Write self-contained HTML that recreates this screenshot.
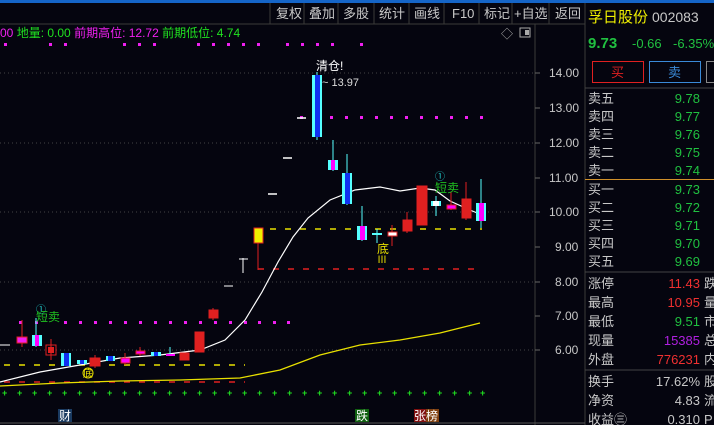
<!DOCTYPE html><html><head><meta charset="utf-8"><style>
*{margin:0;padding:0}body{width:714px;height:425px;background:#05050f;overflow:hidden;position:relative;font-family:"Liberation Sans","Noto Sans CJK SC",sans-serif}
.t{position:absolute;white-space:nowrap;font-size:13px}
</style></head><body>
<svg width="714" height="425" style="position:absolute;left:0;top:0" font-family="Liberation Sans, Noto Sans CJK SC, sans-serif">
<rect x="0" y="0" width="714" height="3" fill="#1565c8"/>
<!-- toolbar -->
<g stroke="#3a3a3a" fill="none"><line x1="0" y1="24" x2="585" y2="24"/>
<line x1="270" y1="3" x2="270" y2="24"/><line x1="304" y1="3" x2="304" y2="24"/><line x1="338" y1="3" x2="338" y2="24"/><line x1="374" y1="3" x2="374" y2="24"/><line x1="409" y1="3" x2="409" y2="24"/><line x1="444" y1="3" x2="444" y2="24"/><line x1="479" y1="3" x2="479" y2="24"/><line x1="512" y1="3" x2="512" y2="24"/><line x1="549" y1="3" x2="549" y2="24"/><line x1="585" y1="3" x2="585" y2="425"/>
<line x1="535" y1="24" x2="535" y2="425"/><line x1="0" y1="423" x2="585" y2="423" stroke="#555"/></g>
<g fill="#c8c8c8" font-size="13"><text x="276" y="18">复权</text><text x="309" y="18">叠加</text><text x="343" y="18">多股</text><text x="379" y="18">统计</text><text x="414" y="18">画线</text><text x="452" y="18">F10</text><text x="484" y="18">标记</text><text x="514" y="18">+自选</text><text x="555" y="18">返回</text></g>
<text x="0" y="37" font-size="12" fill="#f020f0"><tspan>00</tspan><tspan fill="#20e020"> 地量: 0.00 </tspan><tspan> 前期高位: 12.72 </tspan><tspan fill="#20e020"> 前期低位: 4.74</tspan></text>
<text x="501" y="38" font-size="12" fill="#aaa">◇</text><rect x="520" y="28" width="10" height="9" fill="none" stroke="#aaa"/><rect x="525" y="30" width="4" height="5" fill="#aaa"/>
<!-- grid -->
<g stroke="#444" stroke-dasharray="1,3"><line x1="0" y1="73" x2="535" y2="73"/><line x1="0" y1="143" x2="535" y2="143"/><line x1="0" y1="212" x2="535" y2="212"/><line x1="0" y1="282" x2="535" y2="282"/><line x1="0" y1="350" x2="535" y2="350"/></g>
<g stroke="#666"><line x1="535" y1="73" x2="540" y2="73"/><line x1="535" y1="108" x2="540" y2="108"/><line x1="535" y1="143" x2="540" y2="143"/><line x1="535" y1="178" x2="540" y2="178"/><line x1="535" y1="212" x2="540" y2="212"/><line x1="535" y1="247" x2="540" y2="247"/><line x1="535" y1="282" x2="540" y2="282"/><line x1="535" y1="316" x2="540" y2="316"/><line x1="535" y1="350" x2="540" y2="350"/></g>
<g fill="#c8c8c8" font-size="12"><text x="549" y="77">14.00</text><text x="549" y="112">13.00</text><text x="549" y="147">12.00</text><text x="549" y="182">11.00</text><text x="549" y="216">10.00</text><text x="555" y="251">9.00</text><text x="555" y="286">8.00</text><text x="555" y="320">7.00</text><text x="555" y="354">6.00</text></g>
<!-- dots -->
<g fill="#f020f0" id="d">
<rect x="4" y="43" width="3" height="3"/><rect x="49" y="43" width="3" height="3"/><rect x="64" y="43" width="3" height="3"/><rect x="123" y="43" width="3" height="3"/><rect x="138" y="43" width="3" height="3"/><rect x="153" y="43" width="3" height="3"/><rect x="197" y="43" width="3" height="3"/><rect x="212" y="43" width="3" height="3"/><rect x="227" y="43" width="3" height="3"/><rect x="242" y="43" width="3" height="3"/><rect x="257" y="43" width="3" height="3"/><rect x="286" y="43" width="3" height="3"/><rect x="301" y="43" width="3" height="3"/><rect x="316" y="43" width="3" height="3"/><rect x="331" y="43" width="3" height="3"/><rect x="360" y="43" width="3" height="3"/>
</g>
<g fill="#f020f0">
<rect x="300" y="116" width="3" height="3"/><rect x="315" y="116" width="3" height="3"/><rect x="330" y="116" width="3" height="3"/><rect x="345" y="116" width="3" height="3"/><rect x="360" y="116" width="3" height="3"/><rect x="375" y="116" width="3" height="3"/><rect x="390" y="116" width="3" height="3"/><rect x="405" y="116" width="3" height="3"/><rect x="420" y="116" width="3" height="3"/><rect x="435" y="116" width="3" height="3"/><rect x="450" y="116" width="3" height="3"/><rect x="465" y="116" width="3" height="3"/><rect x="480" y="116" width="3" height="3"/>
</g>
<g fill="#f020f0"><text x="0" y="0"/>
<rect x="19" y="321" width="3" height="3"/><rect x="35" y="321" width="3" height="3"/><rect x="64" y="321" width="3" height="3"/><rect x="79" y="321" width="3" height="3"/><rect x="94" y="321" width="3" height="3"/><rect x="109" y="321" width="3" height="3"/><rect x="124" y="321" width="3" height="3"/><rect x="139" y="321" width="3" height="3"/><rect x="154" y="321" width="3" height="3"/><rect x="169" y="321" width="3" height="3"/><rect x="184" y="321" width="3" height="3"/><rect x="199" y="321" width="3" height="3"/><rect x="214" y="321" width="3" height="3"/><rect x="229" y="321" width="3" height="3"/><rect x="244" y="321" width="3" height="3"/><rect x="258" y="321" width="3" height="3"/><rect x="273" y="321" width="3" height="3"/><rect x="287" y="321" width="3" height="3"/>
</g>
<g fill="#20e020" font-size="9" font-weight="bold">
<text x="2" y="396">+</text><text x="17" y="396">+</text><text x="32" y="396">+</text><text x="47" y="396">+</text><text x="62" y="396">+</text><text x="77" y="396">+</text><text x="92" y="396">+</text><text x="107" y="396">+</text><text x="122" y="396">+</text><text x="137" y="396">+</text><text x="152" y="396">+</text><text x="167" y="396">+</text><text x="182" y="396">+</text><text x="197" y="396">+</text><text x="212" y="396">+</text><text x="227" y="396">+</text><text x="242" y="396">+</text><text x="257" y="396">+</text><text x="272" y="396">+</text><text x="287" y="396">+</text><text x="302" y="396">+</text><text x="317" y="396">+</text><text x="332" y="396">+</text><text x="347" y="396">+</text><text x="362" y="396">+</text><text x="377" y="396">+</text><text x="392" y="396">+</text><text x="407" y="396">+</text><text x="422" y="396">+</text><text x="437" y="396">+</text><text x="452" y="396">+</text><text x="467" y="396">+</text><text x="480" y="396">+</text>
</g>
<!-- dashed -->
<g stroke-width="1.5" stroke-dasharray="6,9"><line x1="4" y1="365" x2="245" y2="365" stroke="#e8e000"/><line x1="270" y1="229" x2="482" y2="229" stroke="#e8e000"/><line x1="4" y1="382" x2="245" y2="382" stroke="#e02020"/><line x1="258" y1="269" x2="482" y2="269" stroke="#e02020"/></g>
<!-- MAs -->
<polyline fill="none" stroke="#e8e000" stroke-width="1.3" points="0,386 60,383 120,381 180,380 240,378 280,370 320,355 360,345 400,340 440,333 480,323"/>
<polyline fill="none" stroke="#fff" stroke-width="1.2" points="0,382 40,372 80,365 120,358 160,355 200,350 225,340 245,320 262,292 278,262 293,237 308,218 330,200 355,190 380,187 400,191 420,188 435,190 450,201 470,210 482,215"/>
<!-- candles -->
<g stroke-width="1">
<line x1="22" y1="320" x2="22" y2="347" stroke="#e02020"/><rect x="17" y="337" width="10" height="6" fill="#f020f0" stroke="#e02020"/>
<line x1="36" y1="318" x2="36" y2="347" stroke="#5ff"/><rect x="32" y="335" width="10" height="11" fill="#5ff"/><rect x="35" y="335" width="4" height="11" fill="#f0f"/>
<line x1="51" y1="339" x2="51" y2="360" stroke="#e02020"/><rect x="46" y="345" width="10" height="10" fill="none" stroke="#e02020"/><rect x="48" y="347" width="6" height="6" fill="#e02020"/>
<rect x="61" y="353" width="10" height="13" fill="#5ff"/><rect x="64" y="353" width="5" height="13" fill="#1030f0"/>
<rect x="77" y="360" width="10" height="4" fill="#5ff"/><rect x="80" y="360" width="4" height="4" fill="#1030f0"/>
<line x1="95" y1="355" x2="95" y2="368" stroke="#e02020"/><rect x="90" y="358" width="10" height="8" fill="#e02020" stroke="#e02020"/>
<rect x="106" y="356" width="9" height="5" fill="#5ff"/><rect x="108" y="356" width="5" height="5" fill="#1030f0"/>
<line x1="125" y1="353" x2="125" y2="365" stroke="#e02020"/><rect x="121" y="358" width="9" height="5" fill="#f0f" stroke="#e02020"/>
<line x1="140" y1="347" x2="140" y2="356" stroke="#e02020"/><rect x="136" y="351" width="9" height="3" fill="#f0f" stroke="#e02020"/>
<rect x="151" y="352" width="10" height="4" fill="#5ff"/><rect x="154" y="352" width="4" height="4" fill="#1030f0"/>
<line x1="170" y1="347" x2="170" y2="356" stroke="#5ff"/><rect x="166" y="354" width="9" height="2" fill="#f0f"/>
<rect x="180" y="353" width="9" height="7" fill="#e02020" stroke="#e02020"/>
<rect x="195" y="332" width="9" height="20" fill="#e02020" stroke="#e02020"/>
<line x1="213" y1="308" x2="213" y2="320" stroke="#e02020"/><rect x="209" y="310" width="9" height="8" fill="#e02020" stroke="#e02020"/>
<line x1="224" y1="286" x2="233" y2="286" stroke="#fff"/>
<line x1="243" y1="258" x2="243" y2="273" stroke="#fff"/><line x1="239" y1="259" x2="248" y2="259" stroke="#fff"/>
<line x1="258" y1="228" x2="258" y2="270" stroke="#e02020"/><rect x="254" y="228" width="9" height="15" fill="#f0f000" stroke="#e02020"/>
<line x1="268" y1="194" x2="277" y2="194" stroke="#fff" stroke-width="1.5"/>
<line x1="283" y1="158" x2="292" y2="158" stroke="#fff" stroke-width="1.5"/>
<line x1="297" y1="118" x2="306" y2="118" stroke="#fff" stroke-width="1.5"/>
<line x1="317" y1="72" x2="317" y2="140" stroke="#5ff"/><rect x="312" y="75" width="10" height="62" fill="#5ff"/><rect x="315" y="75" width="5" height="62" fill="#1030f0"/>
<line x1="333" y1="140" x2="333" y2="171" stroke="#5ff"/><rect x="328" y="160" width="10" height="10" fill="#5ff"/><rect x="331" y="160" width="4" height="10" fill="#f0f"/>
<line x1="347" y1="154" x2="347" y2="205" stroke="#5ff"/><rect x="342" y="173" width="10" height="31" fill="#5ff"/><rect x="345" y="173" width="5" height="31" fill="#1030f0"/>
<line x1="362" y1="206" x2="362" y2="241" stroke="#5ff"/><rect x="357" y="226" width="10" height="14" fill="#5ff"/><rect x="360" y="226" width="5" height="14" fill="#f0f"/>
<line x1="377" y1="229" x2="377" y2="243" stroke="#5ff"/><rect x="372" y="233" width="10" height="2" fill="#5ff"/>
<line x1="392" y1="225" x2="392" y2="246" stroke="#e02020"/><rect x="388" y="232" width="9" height="4" fill="#fff" stroke="#e02020"/>
<line x1="407" y1="212" x2="407" y2="233" stroke="#e02020"/><rect x="403" y="220" width="9" height="11" fill="#e02020" stroke="#e02020"/>
<rect x="417" y="186" width="10" height="39" fill="#e02020" stroke="#e02020"/>
<line x1="436" y1="196" x2="436" y2="216" stroke="#5ff"/><rect x="431" y="201" width="10" height="5" fill="#5ff"/><rect x="433" y="201" width="6" height="5" fill="#fff"/>
<line x1="451" y1="192" x2="451" y2="210" stroke="#e02020"/><rect x="447" y="205" width="9" height="4" fill="#f0f" stroke="#e02020"/>
<line x1="466" y1="182" x2="466" y2="220" stroke="#e02020"/><rect x="462" y="199" width="9" height="19" fill="#e02020" stroke="#e02020"/>
<line x1="481" y1="179" x2="481" y2="228" stroke="#5ff"/><rect x="476" y="203" width="10" height="18" fill="#5ff"/><rect x="479" y="203" width="5" height="18" fill="#f0f"/>
</g>
<line x1="0" y1="345" x2="10" y2="345" stroke="#fff"/>
<!-- labels -->
<text x="316" y="70" font-size="12" fill="#fff">清仓!</text><text x="322" y="86" font-size="11" fill="#ddd">~ 13.97</text>
<text x="36" y="313" font-size="10" fill="#2cc">①</text><text x="36" y="321" font-size="12" fill="#20c020">短卖</text>
<text x="435" y="180" font-size="10" fill="#2cc">①</text><text x="435" y="192" font-size="12" fill="#20c020">短卖</text>
<text x="377" y="253" font-size="12" fill="#e8e000">底</text><text x="377" y="263" font-size="10" fill="#e8e000">Ⅲ</text>
<circle cx="88" cy="373" r="5" fill="none" stroke="#e8e000"/><text x="83" y="377" font-size="10" fill="#e8e000">底</text>
<rect x="58" y="409" width="14" height="13" fill="#1a3a60"/><text x="59" y="420" font-size="12" fill="#fff">财</text>
<rect x="355" y="409" width="14" height="13" fill="#106010"/><text x="356" y="420" font-size="12" fill="#fff">跌</text>
<rect x="414" y="409" width="12" height="13" fill="#801010"/><rect x="426" y="409" width="13" height="13" fill="#804010"/><text x="414" y="420" font-size="12" fill="#fff">张榜</text>
<!-- right panel -->
<text x="588" y="22" font-size="15" fill="#f0f000">孚日股份</text><text x="652" y="22" font-size="14" fill="#c8c8c8">002083</text>
<text x="588" y="48" font-size="15" font-weight="bold" fill="#20c040">9.73</text><text x="632" y="48" font-size="13" fill="#20c040">-0.66</text><text x="673" y="48" font-size="13" fill="#20c040">-6.35%</text>
<rect x="592.5" y="61.5" width="51" height="21" fill="none" stroke="#e02020"/><text x="611" y="77" font-size="13" fill="#e02020">买</text>
<rect x="649.5" y="61.5" width="51" height="21" fill="none" stroke="#3a8ad8"/><text x="668" y="77" font-size="13" fill="#3a8ad8">卖</text>
<rect x="706.5" y="61.5" width="10" height="21" fill="none" stroke="#888"/>
<line x1="585" y1="88" x2="714" y2="88" stroke="#444"/>
<g font-size="13" fill="#c8c8c8"><text x="588" y="103">卖五</text><text x="588" y="121">卖四</text><text x="588" y="139">卖三</text><text x="588" y="157">卖二</text><text x="588" y="175">卖一</text>
<text x="588" y="194">买一</text><text x="588" y="212">买二</text><text x="588" y="230">买三</text><text x="588" y="248">买四</text><text x="588" y="266">买五</text></g>
<g font-size="13" fill="#20c040" text-anchor="end"><text x="700" y="103">9.78</text><text x="700" y="121">9.77</text><text x="700" y="139">9.76</text><text x="700" y="157">9.75</text><text x="700" y="175">9.74</text>
<text x="700" y="194">9.73</text><text x="700" y="212">9.72</text><text x="700" y="230">9.71</text><text x="700" y="248">9.70</text><text x="700" y="266">9.69</text></g>
<line x1="585" y1="179.5" x2="714" y2="179.5" stroke="#d0902a"/>
<line x1="585" y1="272" x2="714" y2="272" stroke="#444"/>
<g font-size="13" fill="#c8c8c8"><text x="588" y="288">涨停</text><text x="588" y="307">最高</text><text x="588" y="326">最低</text><text x="588" y="345">现量</text><text x="588" y="364">外盘</text>
<text x="588" y="386">换手</text><text x="588" y="405">净资</text><text x="588" y="424">收益㊂</text>
<text x="704" y="288">跌</text><text x="704" y="307">量</text><text x="704" y="326">市</text><text x="704" y="345">总</text><text x="704" y="364">内</text><text x="704" y="386">股</text><text x="704" y="405">流</text><text x="704" y="424">P</text></g>
<g font-size="13" text-anchor="end"><text x="700" y="288" fill="#f03030">11.43</text><text x="700" y="307" fill="#f03030">10.95</text><text x="700" y="326" fill="#20c040">9.51</text><text x="700" y="345" fill="#b020e0">15385</text><text x="700" y="364" fill="#f03030">776231</text>
<text x="700" y="386" fill="#c8c8c8">17.62%</text><text x="700" y="405" fill="#c8c8c8">4.83</text><text x="700" y="424" fill="#c8c8c8">0.310</text></g>
<line x1="585" y1="370" x2="714" y2="370" stroke="#444"/>
</svg>
</body></html>
